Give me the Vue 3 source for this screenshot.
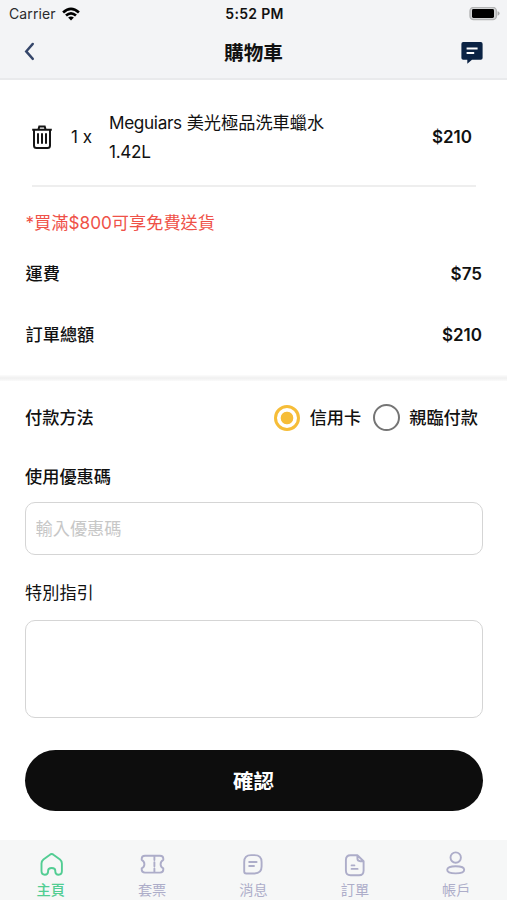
<script setup>
import { ref } from 'vue'

const payment = ref('card')
const methods = [
  { id: 'card', label: '信用卡' },
  { id: 'person', label: '親臨付款' },
]
const coupon = ref('')
const note = ref('')
const active = ref('home')
const tabs = [
  {
    id: 'home',
    label: '主頁',
    d: 'M12.6 4.9Q14.7 3.2 16.8 4.9L23 9.4Q24.9 10.9 24.9 13.5V21Q24.9 24.7 21.6 24.7Q18.3 24.7 18.3 21.5V20.8Q18.3 18 14.7 18Q11.1 18 11.1 20.8V21.5Q11.1 24.7 7.8 24.7Q4.5 24.7 4.5 21V13.5Q4.5 10.9 6.4 9.4Z',
  },
  {
    id: 'ticket',
    label: '套票',
    d: 'M7 5.7H22Q25.3 5.7 25.3 8.8V9.8Q22.6 11.2 22.6 14.2Q22.6 17 25.3 18.4V19.5Q25.3 22.6 22 22.6H7Q3.7 22.6 3.7 19.5V18.4Q6.4 17 6.4 14.2Q6.4 11.2 3.7 9.8V8.8Q3.7 5.7 7 5.7ZM16.4 6V10M16.4 12.2V16.2M16.4 18.4V22.3',
  },
  {
    id: 'message',
    label: '消息',
    d: 'M12 5.1H15.5Q22.6 5.1 22.6 12V16.6Q22.6 23.5 15.5 23.5H7.3Q5.2 23.5 5.2 21.4V12Q5.2 5.1 12 5.1ZM10.2 12H17.6M10.2 16H15',
  },
  {
    id: 'order',
    label: '訂單',
    d: 'M9.5 5.2H16.4L22.6 11.2V20.5Q22.6 25.3 18 25.3H9.5Q4.9 25.3 4.9 20.5V10Q4.9 5.2 9.5 5.2ZM16.4 5.2V8.3Q16.4 11.2 19.3 11.2H22.6M10.6 15.4H13.4M10.6 18.9H16.6',
  },
  {
    id: 'account',
    label: '帳戶',
    d: 'M13.7 2.4A5.2 5.2 0 1 1 13.7 12.8A5.2 5.2 0 1 1 13.7 2.4ZM13.7 16.3C19.2 16.3 22.2 17.6 22.2 19.8C22.2 22.2 19.2 23.4 13.7 23.4C8.2 23.4 5.2 22.2 5.2 19.8C5.2 17.6 8.2 16.3 13.7 16.3Z',
  },
]
</script>

<template>
  <div class="screen">
    <div class="status">
      <div class="carrier">
        <span>Carrier</span>
        <svg class="wifi" viewBox="0 0 18 14">
          <path d="M0.2 4.6Q9 -3.6 17.8 4.6L16 6.5Q9 0.2 2 6.5Z" />
          <path d="M3.1 7.6Q9 2.4 14.9 7.6L13.1 9.5Q9 6 4.9 9.5Z" />
          <path d="M6.1 10.6Q9 8.2 11.9 10.6L9 13.6Z" />
        </svg>
      </div>
      <span class="clock">5:52 PM</span>
      <svg class="battery" viewBox="0 0 31 14">
        <rect x="1" y="0.4" width="26.4" height="12.2" rx="3.6" fill="#d3d4d5" stroke="#b3b4b5" stroke-width="1.4" />
        <rect x="3" y="2" width="22" height="9" rx="1.4" fill="#000" />
        <path d="M28.6 4.3Q30.6 4.9 30.6 6.5T28.6 8.7Z" fill="#a9aaab" />
      </svg>
    </div>

    <header class="bar">
      <button class="icon-btn" aria-label="返回">
        <svg class="back" viewBox="0 0 12 20"><path d="M8.8 1.9L2.2 9.4L8.8 16.9" /></svg>
      </button>
      <h1>購物車</h1>
      <button class="icon-btn end" aria-label="消息">
        <svg class="chat" viewBox="0 0 22 22">
          <path d="M2.2 0.1H19.8Q21.6 0.1 21.6 1.9V15.9Q21.6 17.7 19.8 17.7H11L6.3 21.8V17.7H2.2Q0.4 17.7 0.4 15.9V1.9Q0.4 0.1 2.2 0.1Z" fill="#0b2344" />
          <path d="M5.6 6.6H16.6M5.6 11.1H13.2" stroke="#fff" stroke-width="2" />
        </svg>
      </button>
    </header>

    <section class="cart">
      <div class="item">
        <svg class="trash" viewBox="0 0 20 24">
          <path d="M0.2 4.8H19.8M6.5 4.2L7.3 1.4H12.7L13.5 4.2M2 5V20.4Q2 22.9 4.5 22.9H15.5Q18 22.9 18 20.4V5M6 8.3V18.8M10 8.3V18.8M14 8.3V18.8" />
        </svg>
        <span class="qty">1 x</span>
        <p class="name"><span class="latin">Meguiars</span> 美光極品洗車蠟水<br /><span class="latin">1.42L</span></p>
        <span class="price">$210</span>
      </div>
      <p class="promo">*買滿$800可享免費送貨</p>
      <div class="line"><span>運費</span><span class="price">$75</span></div>
      <div class="line"><span>訂單總額</span><span class="price">$210</span></div>
    </section>

    <main class="form">
      <div class="payment">
        <span class="label">付款方法</span>
        <div class="options">
          <label v-for="m in methods" :key="m.id" class="option">
            <input v-model="payment" type="radio" name="payment" :value="m.id" />
            <span>{{ m.label }}</span>
          </label>
        </div>
      </div>
      <label class="label coupon-label" for="coupon">使用優惠碼</label>
      <input id="coupon" v-model="coupon" class="field coupon" placeholder="輸入優惠碼" />
      <label class="label note-label" for="note">特別指引</label>
      <textarea id="note" v-model="note" class="field note"></textarea>
      <button class="confirm">確認</button>
    </main>

    <nav class="tabs">
      <button v-for="t in tabs" :key="t.id" class="tab" :class="{ active: active === t.id }" @click="active = t.id">
        <svg viewBox="0 0 28 28"><path :d="t.d" /></svg>
        <span>{{ t.label }}</span>
      </button>
    </nav>
  </div>
</template>

<style>
body {
  margin: 0;
  background: #fff;
}
</style>

<style scoped>
* {
  box-sizing: border-box;
}
.screen {
  display: flex;
  flex-direction: column;
  width: 100%;
  height: 900px;
  overflow: hidden;
  background: #fff;
  color: #111;
  font: 400 17.2px/24px Inter, "Noto Sans CJK TC", sans-serif;
}
button {
  padding: 0;
  border: 0;
  background: none;
  font-family: inherit;
  color: inherit;
}
p,
h1 {
  margin: 0;
}
.status {
  display: grid;
  grid-template-columns: 1fr auto 1fr;
  align-items: center;
  height: 27px;
  padding: 0 7px 0 9px;
  background: #f3f4f6;
  font-size: 14px;
}
.carrier {
  display: flex;
  align-items: center;
  gap: 6px;
  letter-spacing: 0.1px;
  color: #2b2b2d;
}
.wifi {
  width: 18px;
  height: 14px;
  fill: #000;
}
.clock {
  font-weight: 600;
  font-size: 14px;
  letter-spacing: 0.3px;
}
.battery {
  justify-self: end;
  width: 31px;
  height: 14px;
}
.bar {
  display: grid;
  grid-template-columns: 1fr auto 1fr;
  align-items: center;
  height: 53px;
  padding: 0 24px;
  border-bottom: 2px solid #e9eaec;
  background: #f3f4f6;
}
.bar h1 {
  font-size: 19.6px;
  font-weight: 700;
  line-height: 28px;
}
.icon-btn {
  display: flex;
  height: 22px;
}
.end {
  justify-self: end;
}
.back {
  width: 12px;
  height: 20px;
  fill: none;
  stroke: #35466a;
  stroke-width: 2.4;
  stroke-linecap: round;
}
.chat {
  width: 22px;
  height: 22px;
}
.cart {
  height: 299px;
}
.item {
  display: flex;
  align-items: center;
  height: 107px;
  margin: 0 31px 0 32px;
  padding: 9px 4px 0 0;
  border-bottom: 2px solid #eee;
}
.trash {
  width: 20px;
  height: 24px;
  fill: none;
  stroke: #161616;
  stroke-width: 2;
}
.qty {
  width: 38px;
  margin-left: 19px;
  font-size: 17px;
}
.name {
  flex: 1;
  line-height: 29px;
}
.latin {
  letter-spacing: -0.35px;
}
.price {
  font-weight: 600;
  font-size: 17px;
}
.promo {
  margin: 24px 26px 0 25.5px;
  color: #ef5148;
}
.line {
  display: flex;
  align-items: center;
  justify-content: space-between;
  height: 61px;
  padding: 0 25px 0 25.5px;
  font-weight: 500;
}
.promo + .line {
  margin-top: 8px;
}
.form {
  display: flex;
  flex-direction: column;
  flex: 1;
  padding: 0 24px 0 25px;
}
.form::before {
  content: "";
  height: 6px;
  margin: -4px -24px 0 -25px;
  background: linear-gradient(#fcfcfc, #f0f0f0 50%, #fafafa);
}
.payment {
  display: flex;
  align-items: center;
  justify-content: space-between;
  height: 73px;
  padding-right: 5px;
}
.label {
  font-weight: 500;
}
.options {
  display: flex;
  gap: 12px;
}
.option {
  display: flex;
  align-items: center;
  gap: 9px;
  font-weight: 500;
}
.option input {
  appearance: none;
  width: 27px;
  height: 27px;
  margin: 0;
  border: 2.5px solid #757575;
  border-radius: 50%;
}
.option input:checked {
  width: 26px;
  height: 26px;
  margin-right: 1px;
  border: 3px solid #f6bd38;
  background: radial-gradient(circle, #f6bd38 5.9px, transparent 6.7px);
}
.coupon-label {
  margin-top: 11px;
}
.field {
  width: 100%;
  border: 1px solid #d5d5d5;
  border-radius: 10px;
  background: #fff;
  font: inherit;
  outline: none;
  resize: none;
}
.coupon {
  height: 53px;
  margin-top: 13px;
  padding: 0 9.5px;
}
.coupon::placeholder {
  color: #c7c7c7;
}
.note-label {
  margin-top: 26px;
  font-weight: 400;
}
.note {
  height: 98px;
  margin-top: 15px;
  padding: 10px;
}
.confirm {
  height: 61px;
  margin-top: 32px;
  padding: 0 1px 2px 0;
  border-radius: 31px;
  background: #0d0d0d;
  color: #fff;
  font-size: 20.5px;
  font-weight: 700;
}
.tabs {
  display: grid;
  grid-template-columns: repeat(5, 1fr);
  height: 60px;
  background: #f6f7f7;
}
.tab {
  display: flex;
  flex-direction: column;
  align-items: center;
  padding-top: 10px;
  color: #adadc9;
  font-size: 14.2px;
  line-height: 23px;
}
.tab svg {
  width: 28px;
  height: 28px;
  fill: none;
  stroke: currentColor;
  stroke-width: 1.9;
  stroke-linecap: round;
  stroke-linejoin: round;
}
.active {
  color: #52cd93;
  font-weight: 500;
}
</style>
